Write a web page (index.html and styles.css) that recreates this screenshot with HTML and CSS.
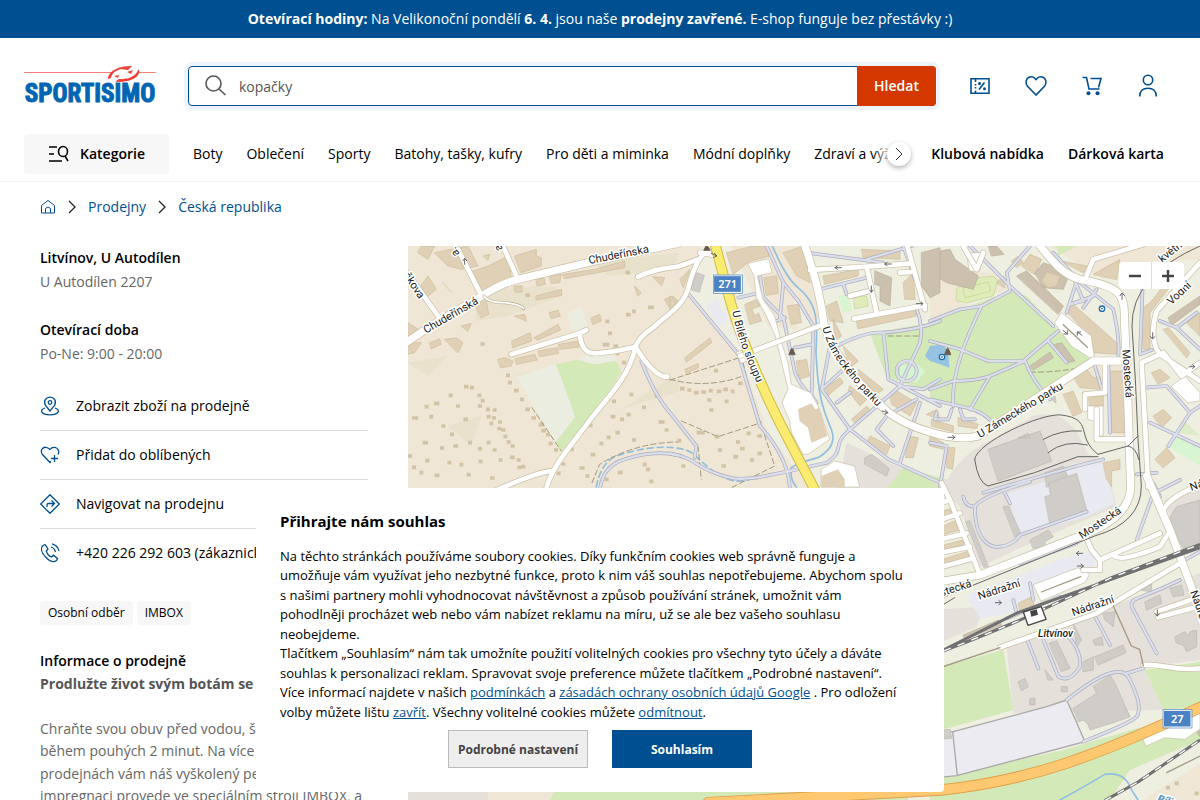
FILE: index.html
```
<!DOCTYPE html>
<html lang="cs">

	<head>
		<meta charset="UTF-8">
		<meta name="viewport" content="width=device-width, initial-scale=1">
		<title>Litvínov, U Autodílen | Sportisimo</title>
		<link rel="stylesheet" href="styles.css">
	</head>

	<body>
		<div class="topbar"><b>Otevírací hodiny:</b> Na Velikonoční pondělí <b>6. 4.</b> jsou naše <b>prodejny zavřené.</b> E-shop funguje bez přestávky :)</div>

		<header class="header">
			<div class="header-row">
				<a class="logo" href="#" aria-label="Sportisimo">
					<svg viewBox="0 0 132 40" width="132" height="40">
						<path d="M0 6.500H88M113 6.500H132" stroke="#f58078" stroke-width="1.200" />
						<text class="logo-text" x="66" y="36" text-anchor="middle">SPORTISIMO</text>
						<path class="logo-ring" d="M84 13C84 4 98-1 108 .500L104 3C97 2 88 5 87 12ZM115 3.500C117 12 104 17 91 15.500L95 13C104 14 112 10 114 4Z" />
						<path class="logo-ring" d="M97 3L108 0L104 4ZM90 10L95 9L94 12ZM103 6L109 4L107 8ZM93 15L103 12L98 16Z" />
					</svg>
				</a>
				<form class="search" onsubmit="return false">
					<label class="search-icon" for="search">
						<svg viewBox="0 0 24 24" width="24" height="24"><circle cx="8.500" cy="9.500" r="7.500" /><path d="M14 15L20.500 21" /></svg>
					</label>
					<input type="text" id="search" name="search" value="kopačky" aria-label="Hledat" />
					<button type="submit">Hledat</button>
				</form>
				<div class="tools">
					<a href="#" aria-label="Slevy">
						<svg viewBox="0 0 24 24" width="24" height="24"><path d="M3 4.700H21V19.300H3Z" /><path d="M7.500 5V8M7.500 10V11.500M7.500 13V14.500M7.500 16.500V19M11 15.500L16.500 8.500" /><circle class="dot" cx="11.500" cy="9.500" r="1.500" /><circle class="dot" cx="16.500" cy="14.700" r="1.500" /></svg>
					</a>
					<a href="#" aria-label="Oblíbené">
						<svg viewBox="0 0 24 24" width="24" height="24"><path d="M12 21L3.500 12.300C1 9 2 5 4.500 3.500C7.500 2 10 3 12 5.500C14 3 16.500 2 19.500 3.500C22 5 23 9 20.500 12.300Z" /></svg>
					</a>
					<a href="#" aria-label="Košík">
						<svg viewBox="0 0 24 24" width="24" height="24"><path d="M2.500 3.500H6.500L9 15H19.500M10.500 4.500H21L18.500 13.500" /><circle class="dot" cx="8.500" cy="19.300" r="2" /><circle class="dot" cx="17.500" cy="19.300" r="2" /></svg>
					</a>
					<a href="#" aria-label="Přihlášení">
						<svg viewBox="0 0 24 24" width="24" height="24"><circle cx="12" cy="6" r="4.700" /><path d="M3.700 22.500C3.500 17 7 14.200 12 14.200S20.500 17 20.300 22.500" /></svg>
					</a>
				</div>
			</div>

			<nav class="nav">
				<button class="nav-cat">
					<svg viewBox="0 0 22 18" width="22" height="18"><path d="M1 2H9M1 9H6M1 16H14" /><ellipse cx="15" cy="6.500" rx="4.500" ry="5" /><path d="M17 11L20 16" /></svg>
					Kategorie
				</button>
				<div class="nav-scroll">
					<div class="nav-list">
						<a href="#">Boty</a>
						<a href="#">Oblečení</a>
						<a href="#">Sporty</a>
						<a href="#">Batohy, tašky, kufry</a>
						<a href="#">Pro děti a miminka</a>
						<a href="#">Módní doplňky</a>
						<a href="#">Zdraví a výživa</a>
					</div>
					<div class="nav-fade">
						<button aria-label="Další"><svg viewBox="0 0 10 14" width="10" height="14"><path d="M2 1L8 7L2 13" /></svg></button>
					</div>
				</div>
				<a class="nav-bold" href="#">Klubová nabídka</a>
				<a class="nav-bold" href="#">Dárková karta</a>
			</nav>
		</header>

		<div class="crumbs">
			<a href="#" aria-label="Domů"><svg viewBox="0 0 16 16" width="16" height="16"><path d="M1.500 6.500L8 1.500L14.500 6.500V14H1.500ZM5.500 14V9.500Q8 6.500 10.500 9.500V14" /></svg></a>
			<svg class="crumb-arrow" viewBox="0 0 8 14" width="8" height="14"><path d="M1 1L7 7L1 13" /></svg>
			<a href="#">Prodejny</a>
			<svg class="crumb-arrow" viewBox="0 0 8 14" width="8" height="14"><path d="M1 1L7 7L1 13" /></svg>
			<a href="#">Česká republika</a>
		</div>

		<main class="store">
			<aside class="info">
				<h1>Litvínov, U Autodílen</h1>
				<p>U Autodílen 2207</p>
				<h2 class="hours">Otevírací doba</h2>
				<p>Po-Ne: 9:00 - 20:00</p>

				<ul class="actions">
					<li><a href="#">
						<svg viewBox="0 0 20 20" width="20" height="20"><path d="M10 15L5.500 9.500C3 5 6 1.200 10 1.200S17 5 14.500 9.500Z" /><circle cx="10" cy="6.500" r="1.800" /><path d="M5 12C-1 14 1 18.800 10 18.800S21 14 15 12" /></svg>
						Zobrazit zboží na prodejně</a></li>
					<li><a href="#">
						<svg viewBox="0 0 20 20" width="20" height="20"><path d="M11 16.500L10 17.500L2.500 9.500C-.500 5 3 2 6 2.300C8 2.500 9 3.500 10 4.500C11 3 13 2 15.500 2.500C18.500 3.500 19.500 6.500 18 9.500M14.500 10V17M11 13.500H18" /></svg>
						Přidat do oblíbených</a></li>
					<li><a href="#">
						<svg viewBox="0 0 20 20" width="20" height="20"><path d="M10 .700L19.300 10L10 19.300L.700 10ZM7 13V11Q7 9.500 8.500 9.500H14M11.500 6.500L14.500 9.500L11.500 12.500" /></svg>
						Navigovat na prodejnu</a></li>
					<li><a href="#">
						<svg viewBox="0 0 20 20" width="20" height="20"><path d="M3 2.500L5 1.500L8 6L6.300 8C7 10.500 9 13 11.500 14L13.500 12.200L17.500 15.500L16.500 17.500C14 19.500 10 18.500 6 14.500C1 9.500 .500 5 3 2.500ZM11 4Q14.500 5 15.500 9M12 .800Q18 2.500 19 8" /></svg>
						+420 226 292 603 (zákaznická linka)</a></li>
				</ul>

				<div class="tags"><span>Osobní odběr</span><span>IMBOX</span></div>

				<h2>Informace o prodejně</h2>
				<div class="text">
					<b>Prodlužte život svým botám se systémem</b><br><br>
					Chraňte svou obuv před vodou, špínou i solí<br>
					během pouhých 2 minut. Na více než sto<br>
					prodejnách vám náš vyškolený personál<br>
					impregnaci provede ve speciálním stroji IMBOX, a<br>
					to šetrně k životnímu prostředí.
				</div>
			</aside>

			<section class="map" aria-label="Mapa">
				<svg class="map-canvas" viewBox="0 0 2376 1740" preserveAspectRatio="xMinYMin slice">
					<defs>
						<!-- ulice, kazda se kresli dvakrat: obrys a vypln -->
						<g id="streets">
							<path d="M150 10L222 152M285 0L328 96M-10 70L92 212" />
							<path d="M310 325L515 262L535 252M515 262Q520 322 560 322Q620 318 682 302Q740 395 778 392M690 92Q740 68 810 62L870 40" />
							<path d="M902 14Q870 25 845 110C830 180 790 195 735 245Q690 275 682 305C660 400 600 450 540 530C480 610 425 670 412 740M250 740Q380 680 430 675" />
							<g transform="translate(786)">
								<path d="M90 20L140 28M420 72L590 62L725 52M712 0L765 190M765 178L552 218M590 62L620 200" />
								<path d="M210 330L460 235M540 150L598 135M690 80L725 78" />
							</g>
							<g transform="translate(1566)">
								<path d="M470 88L490 40L640 -5M100 0L140 70L160 20" />
								<path d="M810 50L680 195Q655 280 690 325L810 405M690 325L635 350L655 723M700 320L755 390L810 350M525 345V440L465 445V490M500 490V580H600" />
							</g>
							<g transform="translate(1566 702)">
								<path d="M35 10L60 60L150 285M700 90Q720 50 810 15" />
								<path d="M470 175L485 210L510 240V270L460 270M510 240L690 160M550 225Q570 250 690 200L712 165" />
								<path d="M210 502L500 400L750 250M640 555C700 550 730 575 810 565M680 395L810 350M685 412L810 378M0 80L60 60M0 130L90 100M0 185L110 160M0 225L120 200M0 270L130 235" />
							</g>
						</g>
						<g id="avenues">
							<path d="M-20 300L60 245L218 152Q280 112 330 100L560 45L810 -8" />
							<path d="M1191 0Q1236 130 1248 235C1266 310 1346 410 1436 495Q1486 535 1566 558Q1650 585 1711 570L2056 345H2140" />
							<path d="M1896 0C1946 60 1966 85 2016 100C2126 120 2151 140 2149 210L2158 420L2168 723Q2165 820 2006 874L1716 987L1566 1012" />
							<path d="M2216 690L2286 852L2376 1092" />
						</g>
						<!-- chodniky -->
						<g id="paths">
							<path d="M700 345Q740 450 790 505L865 600L860 635M575 740Q580 660 650 640Q740 610 810 628" />
							<g transform="translate(786)">
								<path d="M0 622C70 635 80 660 120 675C180 700 200 702 260 695L360 675L470 650C530 610 480 600 540 550M52 140L205 325L270 540Q360 640 360 740M290 0L340 110L385 165L430 240L425 450L440 470M270 90L280 155L340 215L375 380Q390 420 425 450" />
								<path d="M205 155L270 140M340 110L330 215M320 225L345 215M375 305L425 295M410 20L640 50M590 40L725 0M450 130L590 95M520 115L530 145M500 300Q590 255 640 260Q750 250 810 225M640 260L655 400L810 480M480 300L455 430L540 550L655 640L810 710M455 430L520 370M540 550L690 420L760 430L810 400M500 470L540 440M690 650L750 470M700 0L735 100M740 190Q760 240 750 290L690 420M620 550L650 510L740 460M620 550L670 600" />
								<circle cx="710" cy="375" r="30" />
							</g>
							<g transform="translate(1566)">
								<path d="M0 225L90 190L155 180L240 135L230 80L300 0M120 0L240 120L370 240M155 180Q60 370 70 480M0 285L90 310L175 345L280 345L385 255M0 430L70 405Q140 405 180 390L285 345Q310 410 360 460M180 390L120 490M355 285L410 350M0 460L110 485Q170 500 195 540M0 590L50 600L30 723M20 500L15 520H55L65 490M90 490L100 520H135" />
								<path d="M370 20L450 110L550 190Q570 280 565 330M440 105L410 200M435 105L460 165L420 175L490 150M460 185L500 130M490 345L515 430M535 350L540 560M640 70L630 325L665 312M645 425L710 420L780 500L715 600M690 225L740 245L800 200M740 245L810 310M810 480L780 500L715 600M660 530L810 600M620 685L680 680" />
								<path d="M160 740L440 660L520 640" />
							</g>
							<g transform="translate(1566 702)">
								<path d="M100 50Q105 80 135 80V100C140 170 170 205 210 200Q250 195 270 165L470 95M135 80Q150 50 300 5M220 30L240 70M620 180L670 40L750 0M670 10L690 50M230 415L390 350M270 250L440 190M250 360L260 400M300 310L310 360M765 240L810 215" />
								<path d="M290 475L325 565M340 480L385 590Q420 610 450 560Q455 510 410 465M490 400L540 495M680 520L605 380C600 350 630 360 750 300M410 660C510 580 580 550 600 600Q640 680 620 710Q600 730 460 785M590 580L640 565" />
							</g>
						</g>
					</defs>

					<rect class="land" width="2376" height="1740" />

					<!-- plochy -->
					<g class="hills">
						<path d="M220 130L440 120L460 150L300 210L200 225ZM0 350L120 330L60 390ZM120 540L220 510L190 600ZM640 490L780 400L1000 390L800 440ZM320 390L530 335L470 410Z" />
						<path d="M560 50L810 20L800 70L600 90Z" />
					</g>
					<path class="urban" d="M880 0H2376V1740H1500L1200 720L1080 560L990 310L840 140Z" />
					<path class="land" d="M830 210L1000 330L1010 460L1110 720H790ZM970 0H1030L1150 100L1170 250L1080 240ZM1075 0H1200L1245 200L1220 230Z" />
					<path class="field" d="M326 392L444 354L502 512L442 590ZM478 200L520 184L540 245L520 255L488 252ZM540 325L624 330V344L560 355L510 342Z" />
					<path class="grass" d="M444 354L510 342L560 355L624 344L640 378L560 500L460 618L442 590L502 512Z" />
					<g transform="translate(786)">
						<path class="grass" d="M600 262L830 222V450L690 408L648 390Z" />
						<path class="mint" d="M505 150L535 145L545 195L520 200ZM690 360L740 350L765 375L740 410L690 400Z" />
						<path class="pitch" d="M552 155L590 150L595 180L555 188Z" />
						<path class="gray" d="M530 590L700 670L690 740H500Z" />
						<path class="grass" d="M700 665L830 700V740H640Z" />
						<path class="lot" d="M108 180L142 155L155 195L170 205V230L145 240Z" />
					</g>
					<g transform="translate(1566)">
						<path class="land" d="M0 80L190 80L230 130L0 220ZM360 0H810V40L640 50L520 100Z" />
						<path class="grass" d="M0 225L240 135L290 150L385 255L480 340L190 525L110 485L0 455ZM380 0H440L385 30Z" />
						<path class="pitch-line" d="M80 130L105 100L190 90L203 105L190 150L110 170L80 165ZM100 125L175 108L182 135L106 155Z" />
						<path class="water-area" d="M0 300L40 295L55 320L58 365L30 355L0 345L-15 330Z" />
						<path class="gray" d="M40 723Q80 640 150 600L310 510Q420 480 470 620L520 650L500 723Z" />
						<path class="mint" d="M715 600L745 570L810 600V660Z" />
						<path class="grass" d="M760 520L810 570L740 560Z" opacity=".6" />
						<path class="land" d="M430 375L530 345L590 350V570L540 560L530 430Z" />
					</g>
					<g transform="translate(1566 702)">
						<path class="gray" d="M0 0H540L560 80L300 190L150 260L90 80ZM700 60L810 20V200L760 210ZM230 500L540 380L810 280V540L640 560L700 690L250 700ZM0 390L160 380L140 440L0 500Z" />
						<path class="lot" d="M230 40L360 0L430 -50H520L555 70L470 110L270 165ZM110 345L430 225L500 210L490 270L350 310L240 400L150 415Z" />
						<path class="grass" d="M0 570L220 510L250 690L0 760ZM645 570L810 545V680L700 690ZM0 900L400 810L810 690V780L600 870L540 960H0Z" />
						<path class="land" d="M640 960L810 850V1040H600Z" />
						<path class="lot-line" d="M-600 800L0 760L70 755L350 680L410 660L465 785L80 887L0 895H-200ZM68 755L82 887" />
					</g>
					<path class="gray" d="M0 1580H240V1740H0Z" />
					<path class="grass" d="M450 1620H1500V1740H380Z" />

					<!-- budovy -->
					<g class="buildings">
						<path d="M0 230L30 250L0 275ZM30 130L60 90L85 130L60 150ZM80 20L180 0L210 60L160 70L120 60ZM180 80L240 60L300 30L310 95L220 140ZM320 30L385 10V30L400 35V60L340 80ZM465 85L560 70L650 45V65L470 98ZM200 175L235 165L242 205L220 215ZM105 110L130 140M312 285L366 260L372 285L315 305ZM378 275L450 235L458 252L390 282ZM452 295L510 285L515 303L455 310ZM322 338L380 325L388 342L326 355ZM390 315L448 305L452 322L395 332ZM270 340L290 335L315 345L310 360L278 365ZM318 120H342V138H322ZM424 200L450 192L457 210L430 218ZM550 215L575 205L580 225L555 235ZM65 290L95 278L100 295L70 308ZM110 280L145 275L165 290L150 320ZM385 150L460 130L462 148L385 162ZM770 160L795 150L810 165L785 185ZM735 92L770 95L760 118ZM680 120L700 140L690 150ZM320 210L350 205L355 225ZM40 0H80L60 40L30 20ZM0 290H40L20 320L0 325ZM225 30L245 25L240 42ZM385 100L408 95L412 115L388 120ZM425 90L460 85L455 110L430 112ZM160 240L190 232L180 255Z" />
						<g transform="translate(786)">
							<path d="M170 20L250 0H290L300 30L240 45L190 85ZM282 95L320 90L325 142L290 148ZM352 180L385 175L395 230L365 235ZM225 175L262 160L270 180L245 190L255 210L265 200L275 225L240 235ZM380 345L410 340L418 390L388 400ZM340 20L400 0L420 110L380 90ZM460 90L565 70V90L465 115ZM575 10L690 15V40L580 35ZM470 180L500 165L520 230L480 225ZM490 220L515 270L495 285ZM560 225L735 185L740 210L565 248ZM700 110L730 80L735 160L705 160ZM520 300L565 345L540 365ZM565 370L640 430L620 445L570 390ZM540 420L590 460L570 480L535 435ZM660 450L680 435L740 470L720 510L665 475ZM590 590L600 570L660 600L650 625ZM715 570L745 575L730 635L708 635ZM465 425L510 395L520 410L475 448ZM545 520L590 480L605 500L560 535ZM770 505L800 490L810 520ZM45 335L120 275L125 290L50 348ZM45 370L85 352V365L50 382ZM0 150L20 165L0 200ZM30 100L60 70L40 125Z" />
							<path class="steel" d="M62 130L80 80L103 88L88 138ZM585 635L605 625L658 668L650 690L585 655Z" />
						</g>
						<g transform="translate(1566)">
							<path d="M275 60L300 25L335 40L315 85ZM245 45L265 30L280 50L260 65ZM410 195L430 175L560 290V325L490 320L485 280ZM395 45L470 60L460 80ZM490 85L570 40L560 100ZM430 390L470 370L490 395H512V430L450 425ZM400 445L430 435L455 500L430 510ZM475 450H520V480H480ZM540 375H585V560H548ZM665 380L690 370L720 395L685 415ZM670 510L700 490L725 515L695 545ZM675 640L710 605L735 635L700 665ZM635 190L665 165L730 80V110L660 200V310H640ZM700 250L715 245L780 320L770 335ZM770 230L810 200V270ZM5 520L70 540V558L5 540ZM85 515L145 535L140 548L85 540ZM0 570L40 590V610L0 600ZM50 605H75L68 670L50 665ZM520 650L570 640V670L545 675V723L530 700ZM200 110L220 90L225 125Z" />
							<path class="dark" d="M0 20L60 10L75 40L145 90L130 130L50 110L0 80ZM175 0H200L222 25L185 30ZM260 90L290 75L400 180L385 205ZM315 80L340 50L420 80L400 130L340 125ZM715 215L810 150V175L725 238ZM300 360L360 318L370 335L310 372ZM375 295L395 290L435 345L410 350Z" />
							<path d="M335 105L350 78L390 90L380 120L355 125Z" />
							<path class="steel" d="M175 610L330 555L365 645L205 705ZM265 575L295 562L300 575ZM345 680L400 660L415 695L350 723ZM360 455L375 450L378 470Z" />
						</g>
						<g transform="translate(1566 702)">
							<path d="M0 100L70 85V100L0 122ZM0 155L80 120L90 150L0 175ZM0 205L100 180V195L0 220ZM0 250L110 215L120 235L0 265ZM265 370L305 350L312 375L270 392Z" />
							<path class="dark" d="M100 465L205 420L215 435L105 478ZM790 740L810 725V770Z" />
							<path class="steel" d="M345 50L362 45L355 10L440 -20L470 90L360 130ZM220 80L235 78L272 160L255 170ZM108 125L120 122L175 260L162 262ZM300 180L355 150L370 170L345 185V200L310 205ZM430 685L500 640L490 620L540 585L555 610L600 710L575 720L480 750L475 735L460 720L445 725ZM358 490L380 482L420 565L395 575ZM495 530L580 495L588 518L505 555ZM430 430L455 480L440 500ZM490 480L515 470L520 495H495ZM265 605L285 595L295 620L275 632ZM345 570L370 600H355ZM635 330L665 310V335ZM645 365L690 345L695 370L650 390ZM720 325L755 315L762 345L730 350ZM735 470L765 455L775 470L780 455L800 450V500L770 515L760 495L740 490ZM720 110L740 80L810 60V195L760 205L740 170ZM520 400L555 395L550 440L525 420ZM0 755L60 748L65 775L0 780ZM300 655H315V675H300ZM395 620H412V635H395ZM460 545L490 530V570L460 575Z" />
						</g>
						<path class="dark" d="M1401 75L1451 95L1446 180L1416 165V120L1401 115ZM1541 20L1596 5V140L1566 155L1541 120Z" />
					</g>
					<path class="houses" d="M50 482h12M78 472h16M122 448h12M168 422h14M186 425h12M12 516h18M64 512h12M100 540h12M144 480h12M166 520h14M208 448h12M218 464h12M210 480h12M234 490h12M254 492h12M236 512h12M252 516h12M244 532h12M270 528h12M268 548h12M280 552h12M44 590h16M126 565h12M96 606h12M136 600h14M180 590h12M210 608h12M236 590h12M254 612h12M286 572h12M296 588h12M308 600h12M306 634h14M326 642h12M328 664h12M340 662h12M272 642h12M52 644h12M12 664h12M80 688h14M118 650h12M154 656h12M176 686h12M212 646h12M246 696h14M34 680h12M0 630h12M294 388h12M300 410h12M318 434h14M336 460h12M352 490h14M370 516h14M392 536h16M400 554h14M414 566h12M422 592h12M438 612h12M480 610h18M540 538h14M574 592h12M596 574h12M622 560h14M548 626h14M514 666h16M532 690h12M460 654h12M446 682h12M664 446h12M612 466h12M636 520h12M608 512h14M656 506h12M702 484h12M740 450h14M752 528h18M770 552h12M672 582h12M616 300h14M600 262h12M622 322h12M642 350h12M584 296h20M654 206h14M672 196h12M720 184h18M592 226h12M352 148h14M218 294h12M652 80h14M704 655h12M714 670h12M630 680h14M724 706h12M590 700h12" />
					<path class="houses" d="M816 428h14M838 432h12M858 440h14M880 438h14M902 434h12M926 436h14M946 430h14M968 436h12M990 412h14M898 462h12M950 466h12M904 492h12M866 560h24M920 572h14M1016 562h12M1048 570h14M984 588h12M996 608h14M1048 622h14M1026 642h12M976 632h14M930 612h12M940 660h14M820 660h12M808 584h12M918 374h12M2274 1625h12M2300 1612h12M2360 1642h12" />

					<!-- voda a cesty -->
					<g class="river">
						<path d="M1088 -10C1120 60 1140 100 1170 125C1240 180 1225 250 1224 320C1230 440 1240 480 1270 550Q1290 600 1230 635Q1170 650 1150 665Q1145 700 1165 723" />
						<path class="river-dash" d="M565 723Q580 640 640 625C740 595 820 600 850 620C910 670 960 730 1040 695L1110 680" />
						<path d="M1950 1665Q2050 1610 2090 1585Q2150 1575 2170 1630L2190 1662" />
					</g>
					<path class="track" d="M552 710L575 655Q680 590 810 588M372 485L460 615M786 402L1010 330M786 400Q900 430 1010 388M1015 400L1100 660L960 730M820 525L930 572L1060 530M1005 350L1050 530M870 600L880 700M1440 270H1540M1866 378Q1940 380 2010 366" />
					<use class="path-case" href="#paths" />
					<use class="path-fill" href="#paths" />
					<path class="lot-white" d="M1020 52L1082 38L1092 80L1048 90L1065 160L1100 210L1118 280L1140 350L1150 415L1208 440L1230 480L1265 580L1200 625H1185L1150 560L1145 525L1122 470L1140 430L1102 270L1075 210L1045 155L1038 90ZM985 318L1015 310L1015 345L1000 352ZM1240 670L1280 645L1340 660L1355 723H1240Z" />
					<path class="lot-white" d="M1940 230L1960 200L2050 270L2060 345L1990 300ZM1676 20L1730 20L1715 75H1685ZM2040 480H2085V570H2070V530L2040 520ZM2290 420L2330 390L2376 440V465L2340 470ZM1876 1016L2010 965L2045 985L2030 1010L1900 1065ZM2205 1480L2260 1450L2376 1400V1450L2330 1480L2270 1475L2215 1500Z" />
					<path class="trail" d="M1900 1038L2018 992M1966 236L2038 304" />
					<path class="blob" d="M1170 490L1210 472L1222 490L1235 485L1258 570L1210 590L1200 545L1175 525ZM1240 690L1290 670L1310 700V723H1240Z" />
					<use class="street-case" href="#streets" />
					<use class="avenue-case" href="#avenues" />
					<use class="street-fill" href="#streets" />
					<use class="avenue-fill" href="#avenues" />
					<path class="alley" d="M228 150Q240 170 290 170Q340 175 347 188" />
					<path class="alley-fill" d="M228 150Q240 170 290 170Q340 175 347 188" />
					<path class="trail" d="M2116 1080L2170 1200L2195 1210L2206 1260M1566 1275L1776 1205M2276 1580L2376 1530" />

					<!-- hlavni silnice -->
					<path class="main-case" d="M920 -10L960 140C990 260 1060 420 1115 530L1225 740" />
					<path class="main-fill" d="M920 -10L960 140C990 260 1060 420 1115 530L1225 740" />
					<path class="orange-case" d="M900 1670Q1200 1655 1600 1632C1860 1605 2066 1532 2390 1378" />
					<path class="orange-fill" d="M900 1670Q1200 1655 1600 1632C1860 1605 2066 1532 2390 1378" />

					<!-- koleje -->
					<g class="rail">
						<path d="M1700 640C1705 590 1900 500 1960 507C2060 520 2000 570 2070 625L2160 600L2190 570M1700 640Q1710 710 1740 720L1880 680L2010 632H2070M1906 580Q1960 550 2020 555M1920 620Q1970 580 2038 597M2376 0Q2170 90 2172 240L2182 400L2190 580L2200 720Q2200 830 2060 870L1566 1070M2160 600Q2185 605 2192 640M1566 1100L1640 1055" />
					</g>
					<path class="train" d="M1566 1230Q1700 1180 1830 1125L2110 995L2376 895M1600 1215L1830 1100L2376 905M2090 1664L2190 1608L2376 1482" />
					<path class="train-dash" d="M1566 1230Q1700 1180 1830 1125L2110 995L2376 895M2090 1664L2190 1608L2376 1482" />
					<path class="station" d="M1846 1098L1900 1082L1914 1120L1860 1138Z" />
					<path d="M1866 1096L1886 1090L1890 1106L1870 1112Z" fill="#444" />

					<g class="arrows">
						<path d="M170 55V38M165 44L170 37L176 44" />
						<path d="M1300 65H1281M1288 60L1281 65L1288 70M1450 54H1430M1437 49L1430 54L1437 59M1390 120V138M1385 132L1390 139L1395 132M1525 173H1545M1539 168L1545 173L1539 178M1422 495L1440 500M1432 492L1440 500L1430 504M910 22L926 30M920 22L926 30L918 34" />
						<path d="M1965 253L1978 264M1978 254V264H1968M2022 268L2008 258M2008 268V258H2018M2142 160V142M2136 149L2142 141L2150 149M2234 260V278M2228 272L2234 279L2240 272M2345 362H2360M2354 356L2360 362L2354 368M1620 574H1640M1634 568L1640 574L1634 580M2005 922H2024M2012 916L2005 922L2012 928M1762 1070H1780M1773 1064L1780 1070L1773 1076M2008 960H2026M2019 954L2026 960L2019 966M2248 1092V1110M2242 1103L2248 1110L2254 1103" />
						<path class="tower" d="M1143 325L1150 308H1154L1161 325ZM1610 325L1617 308H1621L1628 325ZM888 12L894 0H898L906 12Z" />
					</g>
					<g class="poi">
						<circle cx="2082" cy="188" r="8" /><circle cx="1602" cy="333" r="8" />
						<path d="M2081 188h2M1601 333h2" />
					</g>

					<!-- popisky -->
					<defs>
						<path id="sloupu" d="M973 196Q996 320 1086 490" />
						<path id="zamecky" d="M1243 245C1265 330 1320 395 1440 515" />
					</defs>
					<g class="labels">
						<text transform="translate(54 263) rotate(-30)">Chudeřínská</text>
						<text transform="translate(544 54) rotate(-11)">Chudeřínská</text>
						<text transform="translate(-14 88) rotate(57)">škova</text>
						<text transform="translate(155 24) rotate(-120)">a.</text>
						<text transform="translate(285 8) rotate(-120)">a</text>
						<text><textPath href="#sloupu">U Bílého sloupu</textPath></text>
						<text><textPath href="#zamecky">U Zámeckého parku</textPath></text>
						<text transform="translate(1716 577) rotate(-31)">U Zámeckého parku</text>
						<text transform="translate(2143 311) rotate(86)">Mostecká</text>
						<text transform="translate(2290 178) rotate(-43)">Vodní</text>
						<text transform="translate(2262 50) rotate(-38)">květnice</text>
						<text transform="translate(2022 880) rotate(-34)">Mostecká</text>
						<text transform="translate(1582 1057) rotate(-18)">ostecká</text>
						<text transform="translate(1714 1061) rotate(-18)">Nádražní</text>
						<text transform="translate(1996 1111) rotate(-19)">Nádražní</text>
						<text transform="translate(2346 1038) rotate(70)">Nádražní</text>
						<text transform="translate(2350 735) rotate(-20)">Ná</text>
						<text class="town" x="1890" y="1174">Litvínov</text>
						<text class="creek" transform="translate(2246 1668) rotate(15)">Bílina</text>
					</g>
					<g class="shields">
						<rect x="918" y="89" width="82" height="50" /><text x="959" y="126">271</text>
						<rect x="2267" y="1393" width="82" height="50" /><text x="2308" y="1430">27</text>
					</g>
				</svg>
				<div class="zoom">
					<button aria-label="Oddálit"><svg viewBox="0 0 12 12" width="12" height="12"><path d="M0 6H12" /></svg></button>
					<button aria-label="Přiblížit"><svg viewBox="0 0 12 12" width="12" height="12"><path d="M0 6H12M6 0V12" /></svg></button>
				</div>
			</section>
		</main>

		<div class="cookies" role="dialog" aria-labelledby="cookies-title">
			<h2 id="cookies-title">Přihrajte nám souhlas</h2>
			<p>Na těchto stránkách používáme soubory cookies. Díky funkčním cookies web správně funguje a umožňuje vám využívat jeho nezbytné funkce, proto k nim váš souhlas nepotřebujeme. Abychom spolu s&nbsp;našimi partnery mohli vyhodnocovat návštěvnost a způsob používání stránek, umožnit vám pohodlněji procházet web nebo vám nabízet reklamu na míru, už se ale bez vašeho souhlasu neobejdeme.<br>
			Tlačítkem „Souhlasím“ nám tak umožníte použití volitelných cookies pro všechny tyto účely a dáváte souhlas k personalizaci reklam. Spravovat svoje preference můžete tlačítkem „Podrobné nastavení“.<br>
			Více informací najdete v našich <a href="#">podmínkách</a> a <a href="#">zásadách ochrany osobních údajů Google</a> . Pro odložení volby můžete lištu <a href="#">zavřít</a>. Všechny volitelné cookies můžete <a href="#">odmítnout</a>.</p>
			<div class="cookies-btns">
				<button>Podrobné nastavení</button>
				<button class="primary">Souhlasím</button>
			</div>
		</div>
	</body>

</html>
```
FILE: styles.css
```
* {
	box-sizing: border-box;
}

body {
	margin: 0;
	font-family: "Open Sans", "Noto Sans", sans-serif;
	font-size: 14px;
	line-height: 24px;
	color: #000;
	background: #fff;
}

a {
	color: #004f91;
	text-decoration: none;
}

button, input {
	font-family: inherit;
	font-size: 14px;
}

button {
	border: none;
	padding: 0;
	cursor: pointer;
}

svg {
	display: block;
	fill: none;
	stroke: currentColor;
}

h1, h2, p {
	margin: 0;
	font-size: 14px;
}

h1, h2 {
	font-weight: 600;
}

.topbar {
	background: #004f91;
	color: #fff;
	text-align: center;
	padding: 7px 16px;
}

/* hlavicka */
.header {
	padding: 28px 24px 7px;
	border-bottom: 1px solid #f4f4f4;
}

.header-row {
	display: flex;
	align-items: center;
}

.logo {
	margin-right: 32px;
}

.logo svg {
	stroke: none;
	overflow: visible;
}

.logo-text {
	font-family: "Liberation Sans Narrow", "Roboto Condensed", "Liberation Sans", sans-serif;
	font-weight: bold;
	font-size: 25px;
	fill: #0066b3;
	stroke: #0066b3;
	stroke-width: 1px;
}

.logo-ring {
	fill: #ef4036;
}

.search {
	flex: 1;
	display: flex;
	height: 40px;
	border: 1px solid #004f91;
	border-radius: 4px;
	box-shadow: 0 0 0 4px #eef4fc;
	background: #fff;
}

.search-icon {
	padding: 7px 10px 0 16px;
	color: #555;
}

.search-icon svg {
	overflow: visible;
	stroke-width: 1.6;
}

.search input {
	flex: 1;
	min-width: 0;
	border: none;
	outline: none;
	padding: 0;
	color: #555;
	background: none;
}

.search button {
	width: 79px;
	margin: -1px;
	padding-bottom: 2px;
	background: #d53700;
	color: #fff;
	font-weight: 600;
	border-radius: 0 4px 4px 0;
}

.tools {
	display: flex;
	margin-left: 16px;
}

.tools a {
	display: flex;
	justify-content: center;
	width: 56px;
}

.tools svg {
	stroke-width: 1.6;
}

.tools .dot {
	fill: currentColor;
	stroke: none;
}

.nav {
	display: flex;
	align-items: center;
	margin-top: 28px;
	padding-right: 12px;
	white-space: nowrap;
}

.nav a {
	color: #000;
}

.nav-cat {
	display: flex;
	align-items: center;
	justify-content: center;
	gap: 10px;
	width: 145px;
	height: 40px;
	flex: none;
	border-radius: 4px;
	background: #f7f7f7;
	color: #000;
	font-weight: 600;
	line-height: 24px;
}

.nav-cat svg {
	stroke-width: 1.6;
}

.nav-scroll {
	position: relative;
	flex: 1;
	min-width: 0;
	margin-left: 24px;
}

.nav-list {
	display: flex;
	gap: 24px;
	overflow: hidden;
}

.nav-fade {
	position: absolute;
	top: -12px;
	right: -2px;
	width: 48px;
	height: 48px;
	padding: 12px 0 0 14px;
	background: linear-gradient(to right, rgba(255, 255, 255, 0), #fff 40%);
}

.nav-fade button {
	display: flex;
	align-items: center;
	justify-content: center;
	width: 24px;
	height: 24px;
	border-radius: 50%;
	background: #fff;
	color: #333;
	box-shadow: 0 2px 5px rgba(0, 0, 0, .3);
}

.nav-bold {
	margin-left: 24px;
	font-weight: 600;
}

.nav-scroll + .nav-bold {
	margin-left: 12px;
}

.crumbs {
	display: flex;
	align-items: center;
	gap: 12px;
	padding: 13px 40px 0;
}

.crumb-arrow {
	color: #222;
	stroke-width: 1.3;
}

/* prodejna */
.store {
	display: flex;
	gap: 40px;
	padding: 27px 0 0 40px;
}

.info {
	flex: none;
	width: 328px;
	color: #666;
}

.info h1, .info h2 {
	color: #000;
}

.hours {
	margin-top: 24px;
}

.actions {
	list-style: none;
	margin: 16px 0 24px;
	padding: 0;
}

.actions li {
	border-bottom: 1px solid #ddd;
}

.actions li:last-child {
	border: none;
}

.actions a {
	display: flex;
	align-items: center;
	gap: 16px;
	height: 48px;
	color: #000;
	white-space: nowrap;
}

.actions svg {
	color: #004f91;
	stroke-width: 1.3;
}

.tags {
	display: flex;
	gap: 4px;
	margin-bottom: 24px;
}

.tags span {
	padding: 0 8px;
	border-radius: 4px;
	background: #f7f7f7;
	color: #000;
	font-size: 12px;
}

.text {
	line-height: 1.6;
	white-space: nowrap;
}

.text b {
	color: #555;
}

/* mapa */
.map {
	position: relative;
	flex: 1;
	min-width: 0;
	height: 580px;
	overflow: hidden;
}

.map-canvas {
	width: 100%;
	height: 100%;
	stroke: none;
	stroke-linecap: round;
	stroke-linejoin: round;
}

.land { fill: #f0e6d5; }
.urban { fill: #eeeee1; }
.field { fill: #ecede1; }
.grass { fill: #d3eab8; }
.mint { fill: #d6f5d0; }
.gray { fill: #e5e0d9; }
.lot { fill: #e8e9f1; }
.hills { fill: #dcd8bd; opacity: .35; }
.water-area { fill: #97c3e3; }

.pitch, .pitch-line {
	fill: #dfecba;
	stroke: #bcd590;
	stroke-width: 2px;
}

.lot-line {
	fill: #ebebf1;
	stroke: #aaa9a6;
	stroke-width: 4px;
}

.lot-white {
	fill: #fff;
	stroke: #c9bea4;
	stroke-width: 2px;
}

.buildings {
	fill: #dfd0b6;
	stroke: #cdbc9c;
	stroke-width: 2px;
}

.buildings .dark {
	fill: #ccc0ae;
	stroke: #b9ac98;
}

.buildings .steel {
	fill: #d0cdc9;
	stroke: #bbb7b0;
}

.blob { fill: #dfd0b6; }

.houses {
	stroke: #d2c3a6;
	stroke-width: 11px;
	stroke-linecap: butt;
}

.river {
	stroke: #91bfdf;
	stroke-width: 5px;
}

.river-dash {
	stroke-dasharray: 18 12;
}

.track {
	stroke: #a39a7e;
	stroke-width: 3px;
	stroke-dasharray: 16 9;
}

.path-case { stroke: #a9acbf; stroke-width: 11px; }
.path-fill { stroke: #dcdeea; stroke-width: 7px; }
.street-case { stroke: #c9bea4; stroke-width: 18px; }
.street-fill { stroke: #fff; stroke-width: 14px; }
.avenue-case { stroke: #c9bea4; stroke-width: 26px; }
.avenue-fill { stroke: #fff; stroke-width: 22px; }
.alley { stroke: #b3a98d; stroke-width: 9px; }
.alley-fill { stroke: #fff; stroke-width: 5px; }
.trail { stroke: #a39a82; stroke-width: 4px; }
.main-case { stroke: #d3b94a; stroke-width: 32px; }
.main-fill { stroke: #f9ec70; stroke-width: 26px; }
.orange-case { stroke: #e0a04a; stroke-width: 34px; }
.orange-fill { stroke: #fec870; stroke-width: 29px; }

.rail {
	stroke: #666;
	stroke-width: 3px;
}

.train {
	stroke: #707070;
	stroke-width: 9px;
	stroke-linecap: butt;
}

.train-dash {
	stroke: #fff;
	stroke-width: 4px;
	stroke-dasharray: 22 22;
	stroke-linecap: butt;
}

.station {
	fill: #fff;
	stroke: #444;
	stroke-width: 4px;
}

.arrows {
	stroke: #666;
	stroke-width: 3px;
}

.tower {
	fill: #6b5a50;
	stroke: #6b5a50;
}

.poi {
	fill: #fff;
	stroke: #1d6ea8;
	stroke-width: 4px;
}

.labels {
	font-family: Roboto, "Noto Sans", sans-serif;
	font-size: 33px;
	fill: #222;
	stroke: #fff;
	stroke-width: 9px;
	paint-order: stroke;
}

.town {
	font-size: 31px;
	font-style: italic;
	font-weight: 500;
}

.creek {
	font-style: italic;
	font-weight: bold;
	fill: #5d93c4;
}

.shields rect {
	fill: #4b82c3;
	stroke: #fff;
	stroke-width: 3px;
	outline: 2px solid #4b82c3;
}

.shields text {
	fill: #fff;
	font-family: "Noto Sans", sans-serif;
	font-size: 33px;
	font-weight: 600;
	text-anchor: middle;
}

.zoom {
	position: absolute;
	top: 16px;
	right: 16px;
	display: flex;
	gap: 1px;
	background: #ddd;
	border-radius: 4px;
	overflow: hidden;
}

.zoom button {
	display: flex;
	align-items: center;
	justify-content: center;
	width: 32px;
	height: 27px;
	background: #fff;
	color: #444;
}

.zoom svg {
	stroke-width: 2.4;
}

/* cookies */
.cookies {
	position: fixed;
	left: 0;
	right: 0;
	bottom: 8px;
	max-width: 688px;
	margin: 0 auto;
	padding: 21px 24px 24px;
	border-radius: 4px;
	background: #fff;
}

.cookies h2 {
	font-size: 15px;
	font-weight: 700;
	margin-bottom: 14px;
}

.cookies p {
	padding-right: 14px;
	font-size: 13px;
	line-height: 1.5;
}

.cookies p a {
	text-decoration: underline;
}

.cookies-btns {
	display: flex;
	justify-content: center;
	gap: 24px;
	padding: 8px 0 0;
}

.cookies-btns button {
	width: 140px;
	height: 38px;
	border: 1px solid #bbb;
	background: #eee;
	color: #444;
	font-size: 12px;
	font-weight: 700;
}

.cookies-btns .primary {
	border-color: #004f91;
	background: #004f91;
	color: #fff;
}
```
